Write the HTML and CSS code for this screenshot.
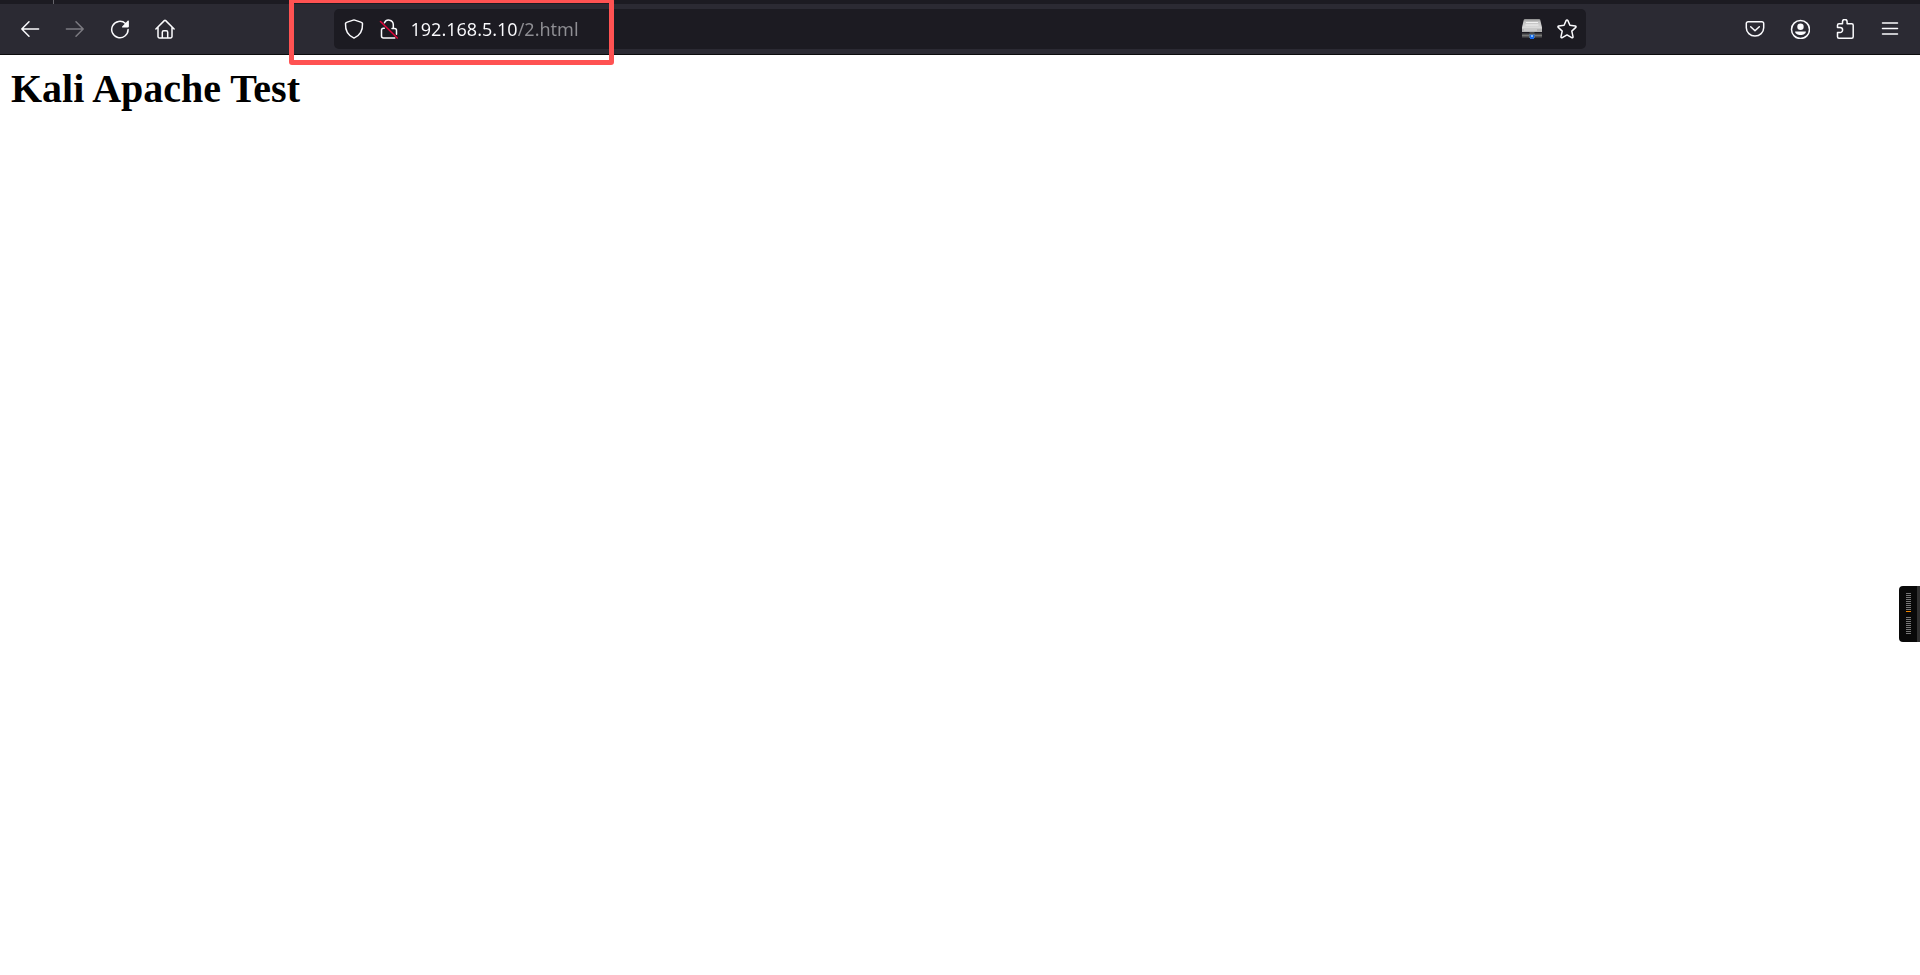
FILE: index.html
```html
<!DOCTYPE html>
<html lang="en">
<head>
<meta charset="utf-8">
<title>Kali Apache Test</title>
<link rel="stylesheet" href="styles.css">
</head>
<body>
<header class="chrome">
  <div class="tabstrip"><span class="tab-divider"></span></div>
  <nav class="toolbar" aria-label="Navigation">
    <div class="group">
      <button class="tool" aria-label="Back"><svg class="icon" viewBox="0 0 20 20"><path d="M18.6 10H1.8M9 2.8L1.8 10 9 17.2"/></svg></button>
      <button class="tool" aria-label="Forward" disabled><svg class="icon" viewBox="0 0 20 20"><path d="M1.4 10h16.8M11 2.8l7.2 7.2-7.2 7.2"/></svg></button>
      <button class="tool" aria-label="Reload"><svg class="icon" viewBox="0 0 20 20"><path d="M18.1 10.500a8.200 8.200 0 1 1-2.600-6"/><path class="solid" d="M18.900 2v5.600a.8.800 0 0 1-.8.800h-5.500c-.6 0-.8-.6-.4-1l5.700-5.800c.4-.4 1-.2 1 .4z"/></svg></button>
      <button class="tool" aria-label="Home"><svg class="icon" viewBox="0 0 20 20"><path d="M.9 10l8.400-8.400a1 1 0 0 1 1.400 0l8.400 8.400M3 8.200v9.200a1.500 1.500 0 0 0 1.500 1.500h11a1.500 1.500 0 0 0 1.500-1.500V8.200M7.300 18.800v-5.500a1.500 1.500 0 0 1 1.500-1.500h2.400a1.500 1.500 0 0 1 1.500 1.500v5.500"/></svg></button>
    </div>
    <span class="spring"></span>
    <form class="urlbar">
      <button type="button" class="url-button" aria-label="Tracking protection"><svg class="icon" viewBox="0 0 20 20"><path d="M10 .9l7.500 2.500a1.300 1.300 0 0 1 1 1.200C18.800 11 16 16.500 10 19.100 4 16.500 1.200 11 1.500 4.600a1.300 1.300 0 0 1 1-1.200z"/></svg></button>
      <button type="button" class="url-button" aria-label="Connection not secure"><svg class="icon" viewBox="0 0 20 20"><path d="M5.500 3.800A4.600 4.600 0 0 1 14.300 5.500V9.600M5.300 9.300H4.500A2 2 0 0 0 2.500 11.300v5.700a2 2 0 0 0 2 2h11.300M13 9.600h2.500a2 2 0 0 1 2 2v3.600"/><path class="slash" d="M1.500 2.500L18.300 19"/></svg></button>
      <input class="address" type="text" aria-label="Address" value="192.168.5.10/2.html" spellcheck="false">
      <button type="button" class="url-button" aria-label="Network drive"><svg class="drive" viewBox="0 0 20 20">
        <defs><linearGradient id="top" x1="0" y1="0" x2="0" y2="1"><stop offset="0" stop-color="#8c8c8c"/><stop offset=".2" stop-color="#c0c0c0"/><stop offset="1" stop-color="#ececec"/></linearGradient></defs>
        <path d="M3 0h14q1 0 1.300 1L20 8.500V13H0V8.500L1.700 1Q2 0 3 0z" fill="url(#top)"/>
        <path d="M4 3.500h12M3.500 6h13" stroke="#f0f0f0"/>
        <path d="M0 9.500h20V13H0z" fill="#b4b4b4"/><path d="M2 11h13" stroke="#dcdcdc"/>
        <path d="M0 14.500h20v4H0z" fill="#555"/><path d="M0 16.500h20" stroke="#777"/>
        <path d="M7.500 13h5v2h-5z" fill="#4a4a4a"/><path d="M7 15h6v4H7z" fill="#55718f"/><path d="M8 16h4v4H8z" fill="#1768e8"/><path d="M9 16h2v2H9z" fill="#82bcff"/>
      </svg></button>
      <button type="button" class="url-button" aria-label="Bookmark this page"><svg class="icon" viewBox="0 0 20 20"><path d="M9.200 1.400a.9.900 0 0 1 1.600 0l2.100 4.900 5.400.6a.9.900 0 0 1 .5 1.500l-4 3.700 1.200 5.600a.9.900 0 0 1-1.300 1L10 15.900l-4.700 2.800a.9.900 0 0 1-1.300-1l1.200-5.600-4-3.700a.9.900 0 0 1 .5-1.500l5.400-.6z"/></svg></button>
    </form>
    <span class="spring"></span>
    <div class="group">
      <button class="tool" aria-label="Save to Pocket"><svg class="icon" viewBox="0 0 20 20"><path d="M3.100 2.700h13.800a1.800 1.800 0 0 1 1.800 1.800v4.300a8.700 8.200 0 0 1-17.400 0V4.500a1.800 1.800 0 0 1 1.800-1.800zM5.700 7.700l4.300 4 4.300-4"/></svg></button>
      <button class="tool" aria-label="Account"><svg class="icon" viewBox="0 0 20 20"><circle cx="10.500" cy="10.500" r="9"/><circle class="solid" cx="10.500" cy="7.800" r="3.200"/><path class="solid" d="M5.100 12.500h10.800c0 2-2.400 3.600-5.400 3.600s-5.400-1.600-5.400-3.600z"/></svg></button>
      <button class="tool" aria-label="Extensions"><svg class="icon" viewBox="0 0 20 20"><path d="M2.500 8.500V6.200A1.500 1.500 0 0 1 4 4.700H7.500V2.700a2.300 2.300 0 0 1 4.600 0V4.700h4.600a1.500 1.500 0 0 1 1.500 1.500v11.500a1.500 1.500 0 0 1-1.500 1.500H4A1.500 1.500 0 0 1 2.500 17.700v-4.200h2.600a2.500 2.500 0 0 0 0-5z"/></svg></button>
      <button class="tool" aria-label="Open application menu"><svg class="icon" viewBox="0 0 20 20"><path d="M2.500 4h15M2.500 9.500h15M2.500 15h15"/></svg></button>
    </div>
  </nav>
</header>
<main class="page">
  <h1 class="title">Kali Apache Test</h1>
</main>
<div class="highlight"></div>
<aside class="grip">
  <span class="ridges"></span>
  <span class="ridges ridges-short"></span>
</aside>
</body>
</html>
```
FILE: styles.css
```css
* { box-sizing: border-box; }
body {
  margin: 0;
  background: #fff;
  color: #000;
  font-family: "Liberation Serif", "Times New Roman", serif;
}
.chrome {
  background: #2b2a33;
  border-bottom: 1px solid #0c0c0d;
}
.tabstrip {
  display: flex;
  height: 4px;
  padding-left: 53px;
  background: #1c1b22;
}
.tab-divider {
  width: 1px;
  background: #66656c;
}
.toolbar {
  display: flex;
  align-items: center;
  padding: 5px 8px;
}
.group {
  display: flex;
  gap: 1px;
}
.tool,
.url-button {
  display: flex;
  align-items: center;
  justify-content: center;
  height: 40px;
  padding: 0;
  border: 0;
  background: none;
  color: #fbfbfe;
}
.tool { width: 44px; }
.tool:disabled { color: #7c7b82; }
.url-button { width: 35px; }
.icon {
  width: 20px;
  height: 20px;
  fill: none;
  stroke: currentColor;
  stroke-width: 1.5;
  stroke-linecap: round;
  stroke-linejoin: round;
}
.icon .solid { fill: currentColor; stroke: none; }
.icon .slash { stroke: #e2063a; }
.drive { width: 20px; height: 20px; }
.spring { flex: 147 1 0; }
.urlbar {
  display: flex;
  flex: 1252 1 0;
  min-width: 0;
  height: 40px;
  margin: 0;
  padding: 0 2px 0 3px;
  border-radius: 5px;
  background: #1c1b22;
}
.address {
  flex: 1;
  min-width: 0;
  padding: 0 0 0 4px;
  border: 0;
  outline: 0;
  background: linear-gradient(to right, #fbfbfe 111px, #8f8f94 111px);
  background-clip: text;
  -webkit-background-clip: text;
  color: transparent;
  font: 18px "Noto Sans", "Open Sans", sans-serif;
}
.page { padding: 10px 11px; }
.title {
  margin: 0;
  font-size: 40px;
  line-height: 48px;
}
.highlight {
  position: absolute;
  top: -2px;
  left: 289px;
  width: 325px;
  height: 67px;
  border: 5px solid #ff5252;
  border-radius: 3px;
  pointer-events: none;
}
.grip {
  position: fixed;
  top: 586px;
  right: 0;
  display: flex;
  flex-direction: column;
  gap: 5px;
  width: 21px;
  height: 56px;
  padding: 7px 0 0 7px;
  border-right: 3px solid #303030;
  border-radius: 4px 0 0 4px;
  background: #090909;
}
.ridges {
  width: 5px;
  height: 19px;
  background: repeating-linear-gradient(#777 0 1px, transparent 1px 2px);
}
.ridges:first-child { border-bottom: 1px solid #ef8500; }
.ridges-short { height: 17px; }
```
